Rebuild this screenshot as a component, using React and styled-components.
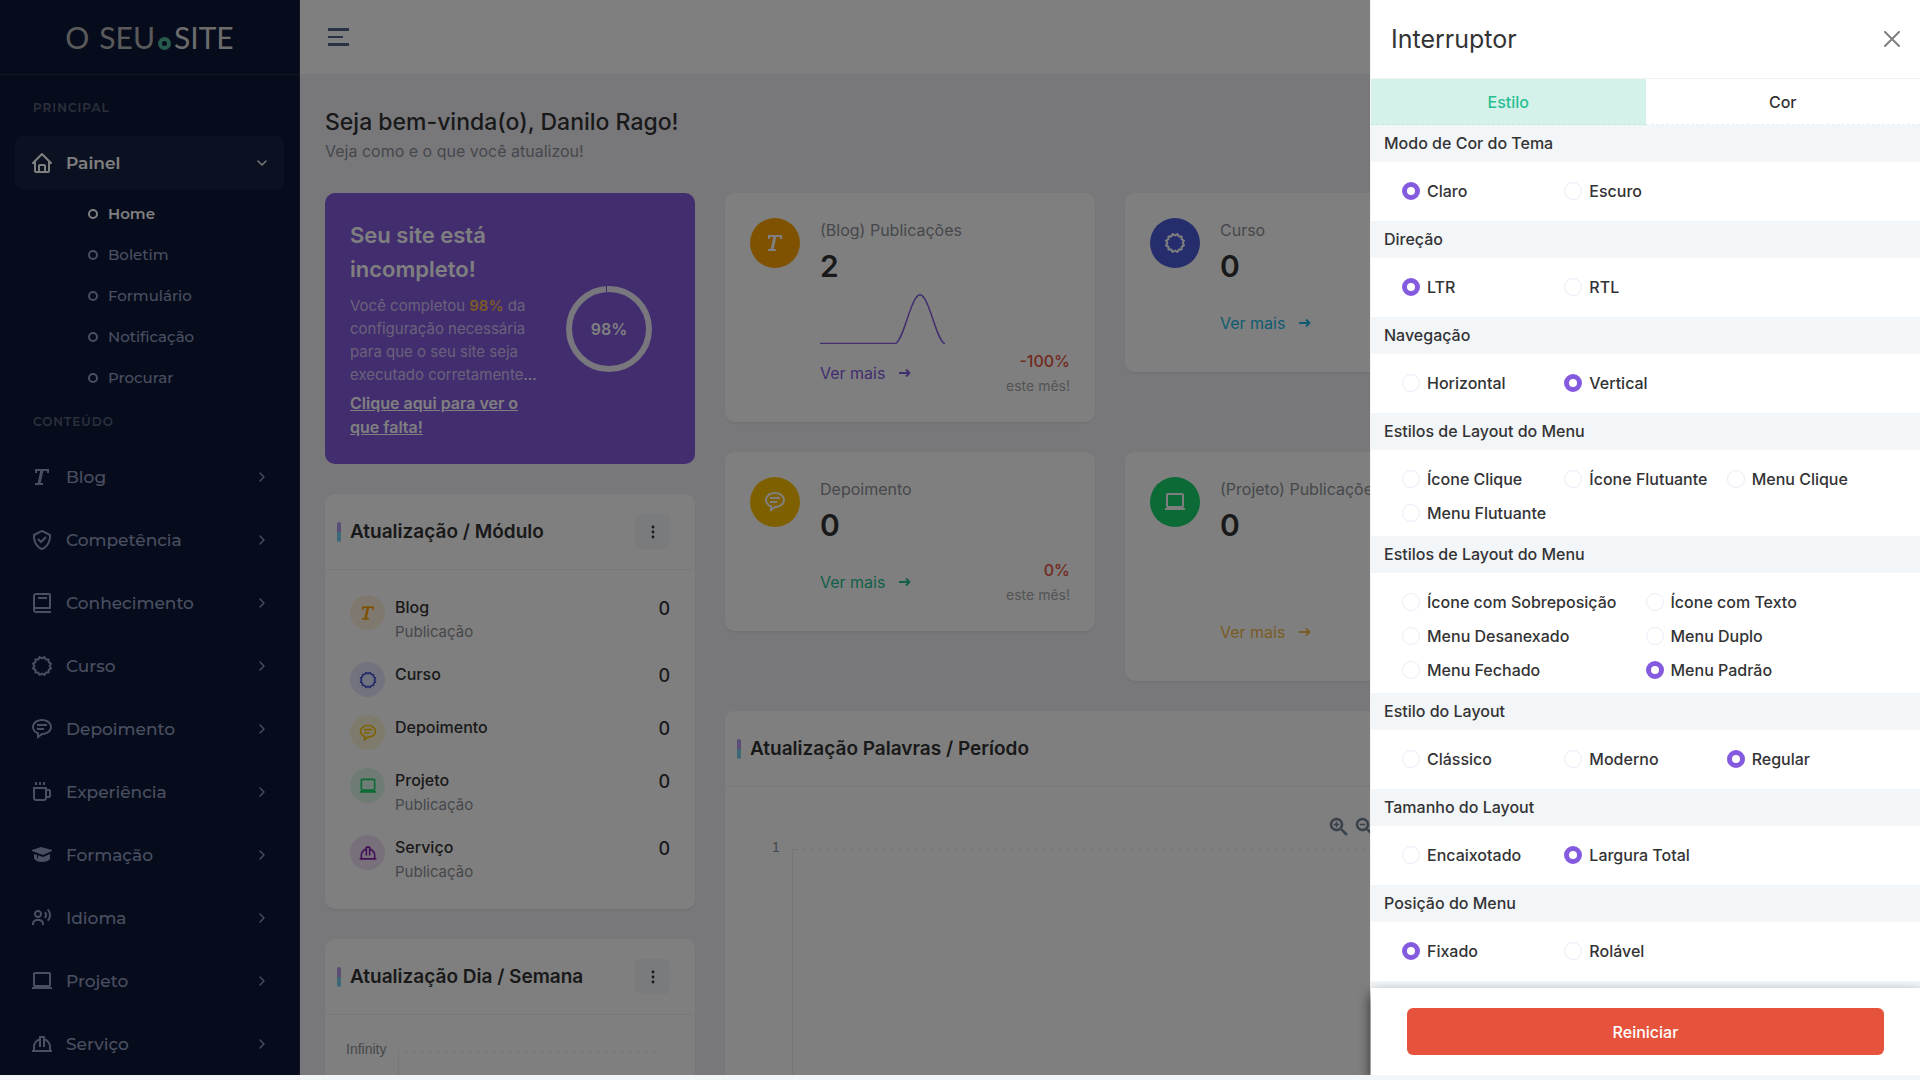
import React from "react";
import styled, { createGlobalStyle } from "styled-components";
import {
  BiHome, BiText, BiCheckShield, BiBook, BiCertification, BiMessageRoundedDetail,
  BiCoffee, BiSolidGraduation, BiUserVoice, BiLaptop, BiHardHat,
} from "react-icons/bi";
import { FiChevronRight, FiChevronDown } from "react-icons/fi";
import { MdOutlineZoomIn, MdOutlineZoomOut } from "react-icons/md";

const color = {
  primary: "#845adf",
  success: "#26bf94",
  danger: "#e6533c",
  text: "#333335",
  muted: "#8c9097",
  border: "#f3f3f3",
  light: "#f3f6f8",
  menu: "#a3aed1",
};

const GlobalStyle = createGlobalStyle`
  *, *::before, *::after { box-sizing: border-box; }
  body {
    margin: 0;
    background: ${color.light};
    color: ${color.text};
    font-family: Inter, "Liberation Sans", sans-serif;
    font-size: 16px;
    line-height: 24px;
    overflow: hidden;
  }
  h1, h2, h3, p, ul, fieldset { margin: 0; padding: 0; border: 0; }
  ul { list-style: none; }
  a { color: inherit; text-decoration: none; }
  button { font: inherit; color: inherit; background: none; border: 0; padding: 0; cursor: pointer; }
  svg { display: block; flex: none; }
`;

const Shell = styled.div`
  display: flex;
  height: calc(100vh - 5px);
  overflow: hidden;
`;

/* ---------- Sidebar ---------- */

const Sidebar = styled.aside`
  flex: none;
  width: 300px;
  background: #0d1839;
  border-right: 1px solid rgba(255, 255, 255, 0.1);
  color: ${color.menu};
  font-family: Montserrat, Inter, sans-serif;
`;

const Brand = styled.a`
  display: flex;
  align-items: center;
  justify-content: center;
  height: 75px;
  border-bottom: 1px solid rgba(255, 255, 255, 0.1);
  font-family: Lato, sans-serif;
  font-size: 30px;
  line-height: 40px;
  color: #b4b4b4;
`;

const BrandRing = styled.span`
  margin-right: 10px;
`;

const BrandStrong = styled.span`
  color: #d8d8d8;
`;

const BrandDot = styled.i`
  width: 13px;
  height: 13px;
  margin: 13px 3px 0;
  border: 4px solid #4fb398;
  border-radius: 50%;
`;

const Category = styled.h2`
  padding: ${(p) => (p.$first ? "24px 33px 19px" : "15px 33px 19px")};
  font-size: 12px;
  line-height: 18px;
  font-weight: 600;
  letter-spacing: 1px;
  text-transform: uppercase;
  color: #585f78;
`;

const MenuList = styled.ul`
  display: flex;
  flex-direction: column;
  gap: 10px;
  padding: 0 15px;
`;

const MenuButton = styled.button`
  display: flex;
  align-items: center;
  gap: 12px;
  width: 100%;
  height: 53px;
  padding: 0 14px 0 15px;
  border-radius: 8px;
  font-size: 17px;
  font-weight: ${(p) => (p.$active ? 600 : 500)};
  color: ${(p) => (p.$active ? "#fff" : color.menu)};
  background: ${(p) => (p.$active ? "rgba(255, 255, 255, 0.05)" : "none")};
  opacity: ${(p) => (p.$active ? 1 : 0.9)};
  text-align: left;

  span { flex: 1; }
`;

const SubList = styled.ul`
  padding: 4px 0 0 73px;
`;

const SubLink = styled.a`
  display: flex;
  align-items: center;
  gap: 10px;
  height: 41px;
  font-size: 15px;
  font-weight: ${(p) => (p.$active ? 600 : 500)};
  color: ${(p) => (p.$active ? "#fff" : color.menu)};
  opacity: ${(p) => (p.$active ? 1 : 0.9)};

  &::before {
    content: "";
    width: 10px;
    height: 10px;
    border: 2px solid currentColor;
    border-radius: 50%;
  }
`;

/* ---------- Main ---------- */

const Main = styled.div`
  flex: 1;
  min-width: 0;
  background: #f0f1f7;
`;

const TopBar = styled.header`
  display: flex;
  align-items: center;
  height: 74px;
  padding: 0 28px;
  background: #fff;
`;

const Burger = styled.button`
  display: flex;
  flex-direction: column;
  justify-content: space-between;
  width: 21px;
  height: 18px;

  i { height: 3px; background: #536485; width: 100%; }
  i:nth-child(2) { width: 15px; height: 2px; }
`;

const Content = styled.main`
  padding: 34px 25px 0;
`;

const Welcome = styled.div`
  margin-bottom: 27px;

  h1 { font-size: 23px; line-height: 28px; font-weight: 500; }
  p { font-size: 16px; line-height: 30px; color: ${color.muted}; }
`;

const Columns = styled.div`
  display: grid;
  grid-template-columns: repeat(4, 1fr);
  gap: 30px;
  align-items: start;
`;

const Stack = styled.div`
  display: flex;
  flex-direction: column;
  gap: 30px;
`;

const Wide = styled(Stack)`
  grid-column: span 3;
`;

const StatGrid = styled.div`
  display: grid;
  grid-template-columns: repeat(3, 1fr);
  gap: 30px;
  align-items: start;
`;

const Card = styled.section`
  background: #fff;
  border-radius: 10px;
  box-shadow: 0 2px 2px rgba(0, 0, 0, 0.05);
`;

const PromoCard = styled(Card)`
  display: flex;
  align-items: center;
  padding: 25px;
  background: ${color.primary};
  color: #fff;
  box-shadow: none;
`;

const PromoText = styled.div`
  width: 192px;
  margin-right: 24px;

  h2 { font-size: 22px; line-height: 34px; font-weight: 600; margin-bottom: 8px; }
  a { display: block; margin-top: 5px; font-weight: 600; line-height: 24px; text-decoration: underline; }
`;

const PromoCopy = styled.p`
  font-size: 15px;
  line-height: 23px;
  color: rgba(255, 255, 255, 0.65);

  b { font-weight: 600; color: #f5b849; }
  span { color: #fff; }
`;

const Ring = styled.svg`
  text {
    font-size: 16px;
    font-weight: 600;
    fill: #fff;
    text-anchor: middle;
  }
`;

const StatCard = styled(Card)`
  display: flex;
  gap: 20px;
  padding: 25px;
`;

const RoundIcon = styled.span`
  display: flex;
  align-items: center;
  justify-content: center;
  flex: none;
  width: ${(p) => p.$size}px;
  height: ${(p) => p.$size}px;
  border-radius: 50%;
  background: ${(p) => p.$bg};
  color: ${(p) => p.$fg};
`;

const StatBody = styled.div`
  flex: 1;
  color: ${color.muted};
`;

const StatValue = styled.p`
  margin: 5px 0 9px;
  font-size: 30px;
  line-height: 38px;
  font-weight: 600;
  color: ${color.text};
`;

const Spark = styled.svg`
  width: 125px;
  height: 50px;
`;

const StatFoot = styled.div`
  display: flex;
  align-items: center;
  justify-content: space-between;
  height: 53px;
  padding-top: 4px;
`;

const MoreLink = styled.a`
  display: flex;
  align-items: center;
  gap: 14px;
  color: ${(p) => p.$tone};
`;

const Trend = styled.p`
  display: flex;
  flex-direction: column;
  align-items: flex-end;
  padding-top: 2px;
  font-size: 14px;
  line-height: 26px;
  color: #a6a9ae;

  b { font-size: 16px; line-height: 24px; font-weight: 500; color: ${color.danger}; }
`;

const CardHead = styled.header`
  display: flex;
  align-items: center;
  justify-content: space-between;
  height: 76px;
  padding: 0 25px 0 12px;
  border-bottom: 1px solid ${color.border};
`;

const CardTitle = styled.h2`
  display: flex;
  align-items: center;
  gap: 9px;
  font-size: 19px;
  font-weight: 600;

  &::before {
    content: "";
    width: 4px;
    height: 20px;
    border-radius: 2px;
    background: linear-gradient(to bottom, #b59cec 50%, #7bd3ef 50%);
  }
`;

const MoreButton = styled.button`
  display: flex;
  align-items: center;
  justify-content: center;
  width: 35px;
  height: 35px;
  border-radius: 5px;
  background: ${color.light};
`;

const ModuleList = styled.ul`
  display: flex;
  flex-direction: column;
  gap: 18px;
  padding: 25px;
`;

const ModuleRow = styled.li`
  display: flex;
  gap: 10px;
  min-height: 35px;

  div { flex: 1; }
  h3 { font-size: 16px; line-height: 24px; font-weight: 500; }
  p { font-size: 15px; line-height: 25px; color: ${color.muted}; }
  strong { font-size: 18px; line-height: 27px; font-weight: 500; }
`;

const ChartArea = styled.div`
  display: flex;
  flex-direction: column;
  padding: ${(p) => p.$pad};
  color: ${color.muted};
`;

const ChartTools = styled.div`
  display: flex;
  gap: 2px;
  height: 24px;
  width: 543px;
  margin-left: auto;
  color: #6e8192;

  path:not([fill="none"]) { stroke: currentColor; stroke-width: 0.6; }
  path[fill="none"] { stroke: none; }
`;

const Plot = styled.div`
  display: flex;
  gap: 12px;
  font-family: "Liberation Sans", sans-serif;
  font-size: 14px;
  line-height: 16px;

  &::after {
    content: "";
    flex: 1;
    height: 320px;
    margin: 10px 12px 0 0;
    border-left: 1px solid #eceef1;
    background: linear-gradient(to right, #ebebee 50%, transparent 50%) top / 8px 1px repeat-x;
  }
`;

/* ---------- Settings panel ---------- */

const Backdrop = styled.div`
  position: fixed;
  inset: 0 0 5px;
  background: rgba(0, 0, 0, 0.5);
`;

const Panel = styled.aside`
  position: fixed;
  inset: 0 0 5px auto;
  display: flex;
  flex-direction: column;
  width: 550px;
  border-left: 1px solid ${color.border};
  background: #fff;
`;

const PanelHead = styled.header`
  display: flex;
  align-items: center;
  justify-content: space-between;
  flex: none;
  height: 79px;
  padding: 0 20px;
  border-bottom: 1px solid ${color.border};

  h2 { font-size: 25px; line-height: 32px; font-weight: 400; }
  button { color: #808080; }
`;

const Tabs = styled.div`
  display: grid;
  grid-template-columns: 1fr 1fr;
  flex: none;
`;

const Tab = styled.button`
  height: 46px;
  border-bottom: 1px dashed ${(p) => (p.$active ? "#bfe9dd" : "#eceff2")};
  font-weight: 500;
  color: ${(p) => (p.$active ? color.success : color.text)};
  background: ${(p) => (p.$active ? "#d4f2e9" : "#fff")};
`;

const PanelBody = styled.form`
  flex: 1;
  min-height: 0;
  overflow: hidden;
`;

const GroupTitle = styled.h3`
  padding: 0 13px;
  font-size: 16px;
  line-height: 37px;
  font-weight: 500;
  background: ${color.light};
`;

const Options = styled.div`
  display: grid;
  grid-template-columns: repeat(${(p) => p.$cols}, 1fr);
  row-gap: 10px;
  align-content: start;
  min-height: 59px;
  padding: 17px 31px 11px;
`;

const Option = styled.label`
  display: flex;
  align-items: center;
  gap: 7px;
  height: 24px;
  font-weight: 500;
  white-space: nowrap;
`;

const Radio = styled.input`
  appearance: none;
  flex: none;
  width: 18px;
  height: 18px;
  margin: 0;
  border: 1px solid #e9edf6;
  border-radius: 50%;
  background: #fff;

  &:checked { border: 5px solid ${color.primary}; }
`;

const PanelFoot = styled.footer`
  flex: none;
  padding: 20px 36px;
  background: #fff;
  box-shadow: 0 6px 12px rgba(0, 0, 0, 0.7);
  clip-path: inset(-6px 0 0 -14px);
`;

const ResetButton = styled.button`
  display: block;
  width: 100%;
  height: 47px;
  border-radius: 6px;
  background: ${color.danger};
  color: #fff;
  font-weight: 500;
`;

/* ---------- Data ---------- */

const subItems = ["Home", "Boletim", "Formulário", "Notificação", "Procurar"];

const menuItems = [
  ["Blog", BiText],
  ["Competência", BiCheckShield],
  ["Conhecimento", BiBook],
  ["Curso", BiCertification],
  ["Depoimento", BiMessageRoundedDetail],
  ["Experiência", BiCoffee],
  ["Formação", BiSolidGraduation],
  ["Idioma", BiUserVoice],
  ["Projeto", BiLaptop],
  ["Serviço", BiHardHat],
];

const modules = [
  { name: "Blog", sub: "Publicação", icon: BiText, fg: "#ffa505", bg: "#fff1dc" },
  { name: "Curso", icon: BiCertification, fg: "#4b5bdb", bg: "#e4e6fa" },
  { name: "Depoimento", icon: BiMessageRoundedDetail, fg: "#ffc102", bg: "#fff7d9" },
  { name: "Projeto", sub: "Publicação", icon: BiLaptop, fg: "#19d46d", bg: "#dcf9e8" },
  { name: "Serviço", sub: "Publicação", icon: BiHardHat, fg: "#8920ad", bg: "#f0e0f5" },
];

const groups = [
  ["Modo de Cor do Tema", 3, ["Claro", "Escuro"], "Claro"],
  ["Direção", 3, ["LTR", "RTL"], "LTR"],
  ["Navegação", 3, ["Horizontal", "Vertical"], "Vertical"],
  ["Estilos de Layout do Menu", 3, ["Ícone Clique", "Ícone Flutuante", "Menu Clique", "Menu Flutuante"], null],
  ["Estilos de Layout do Menu", 2, ["Ícone com Sobreposição", "Ícone com Texto", "Menu Desanexado", "Menu Duplo", "Menu Fechado", "Menu Padrão"], "Menu Padrão"],
  ["Estilo do Layout", 3, ["Clássico", "Moderno", "Regular"], "Regular"],
  ["Tamanho do Layout", 3, ["Encaixotado", "Largura Total"], "Largura Total"],
  ["Posição do Menu", 3, ["Fixado", "Rolável"], "Fixado"],
];

/* ---------- Parts ---------- */

const ArrowIcon = () => (
  <svg width="12" height="12" viewBox="0 0 12 12" fill="none" stroke="currentColor" strokeWidth="2" aria-hidden="true">
    <path d="M0 6h10.5M7 2.5 10.5 6 7 9.5" strokeLinejoin="round" />
  </svg>
);

const DotsIcon = () => (
  <svg width="4" height="14" viewBox="0 0 4 14" fill="currentColor" aria-hidden="true">
    <circle cx="2" cy="2" r="1.4" />
    <circle cx="2" cy="7" r="1.4" />
    <circle cx="2" cy="12" r="1.4" />
  </svg>
);

function Stat({ title, value, icon: Icon, bg, tone, spark, blank, trend }) {
  return (
    <StatCard>
      <RoundIcon $size={50} $bg={bg} $fg="#fff"><Icon size={24} /></RoundIcon>
      <StatBody>
        <p>{title}</p>
        <StatValue>{value}</StatValue>
        {(spark || blank) && (
          <Spark viewBox="0 0 125 50" fill="none" stroke={color.primary} strokeWidth="1.5">
            {spark && <path d="M0 49.5H75C83 49.5 91 .75 100 .75S117 49.5 125 49.5" />}
          </Spark>
        )}
        <StatFoot>
          <MoreLink href="#" $tone={tone}>Ver mais <ArrowIcon /></MoreLink>
          {trend && <Trend><b>{trend}</b>este mês!</Trend>}
        </StatFoot>
      </StatBody>
    </StatCard>
  );
}

function TitledHead({ title, menu }) {
  return (
    <CardHead>
      <CardTitle>{title}</CardTitle>
      {menu && <MoreButton aria-label="Mais opções"><DotsIcon /></MoreButton>}
    </CardHead>
  );
}

function Settings() {
  return (
    <Panel aria-label="Interruptor">
      <PanelHead>
        <h2>Interruptor</h2>
        <button aria-label="Fechar">
          <svg width="16" height="16" viewBox="0 0 16 16" fill="none" stroke="currentColor" strokeWidth="2" strokeLinecap="round">
            <path d="M1 1 15 15M15 1 1 15" />
          </svg>
        </button>
      </PanelHead>
      <Tabs role="tablist">
        <Tab role="tab" aria-selected="true" $active>Estilo</Tab>
        <Tab role="tab" aria-selected="false">Cor</Tab>
      </Tabs>
      <PanelBody>
        {groups.map(([title, cols, options, checked], g) => (
          <fieldset key={g} aria-label={title}>
            <GroupTitle>{title}</GroupTitle>
            <Options $cols={cols}>
              {options.map((name) => (
                <Option key={name}>
                  <Radio type="radio" name={`group-${g}`} defaultChecked={name === checked} />
                  {name}
                </Option>
              ))}
            </Options>
          </fieldset>
        ))}
        <GroupTitle aria-hidden="true">&nbsp;</GroupTitle>
      </PanelBody>
      <PanelFoot>
        <ResetButton>Reiniciar</ResetButton>
      </PanelFoot>
    </Panel>
  );
}

export default function App() {
  return (
    <>
      <GlobalStyle />
      <Shell>
        <Sidebar>
          <Brand href="#">
            <BrandRing>O</BrandRing>SEU<BrandDot /><BrandStrong>SITE</BrandStrong>
          </Brand>
          <nav>
            <Category $first>Principal</Category>
            <MenuList>
              <li>
                <MenuButton $active>
                  <BiHome size={24} /><span>Painel</span><FiChevronDown size={16} />
                </MenuButton>
                <SubList>
                  {subItems.map((name) => (
                    <li key={name}><SubLink href="#" $active={name === "Home"}>{name}</SubLink></li>
                  ))}
                </SubList>
              </li>
            </MenuList>
            <Category>Conteúdo</Category>
            <MenuList>
              {menuItems.map(([name, Icon]) => (
                <li key={name}>
                  <MenuButton>
                    <Icon size={24} /><span>{name}</span><FiChevronRight size={16} />
                  </MenuButton>
                </li>
              ))}
            </MenuList>
          </nav>
        </Sidebar>

        <Main>
          <TopBar>
            <Burger aria-label="Alternar menu"><i /><i /><i /></Burger>
          </TopBar>
          <Content>
            <Welcome>
              <h1>Seja bem-vinda(o), Danilo Rago!</h1>
              <p>Veja como e o que você atualizou!</p>
            </Welcome>
            <Columns>
              <Stack>
                <PromoCard>
                  <PromoText>
                    <h2>Seu site está incompleto!</h2>
                    <PromoCopy>
                      Você completou <b>98%</b>
                      {" da "}
                      {"configuração necessária para que o seu site seja executado corretamente"}
                      <span>...</span>
                    </PromoCopy>
                    <a href="#">Clique aqui para ver o que falta!</a>
                  </PromoText>
                  <Ring width="86" height="86" viewBox="0 0 86 86">
                    <circle cx="43" cy="43" r="40" fill="none" stroke="#fff" strokeOpacity="0.9" strokeWidth="6" />
                    <path d="M40.5 0v6" stroke={color.primary} strokeWidth="1" />
                    <text x="43" y="49">98%</text>
                  </Ring>
                </PromoCard>
                <Card>
                  <TitledHead title="Atualização / Módulo" menu />
                  <ModuleList>
                    {modules.map(({ name, sub, icon: Icon, fg, bg }) => (
                      <ModuleRow key={name}>
                        <RoundIcon $size={35} $bg={bg} $fg={fg}><Icon size={20} /></RoundIcon>
                        <div>
                          <h3>{name}</h3>
                          {sub && <p>{sub}</p>}
                        </div>
                        <strong>0</strong>
                      </ModuleRow>
                    ))}
                  </ModuleList>
                </Card>
                <Card>
                  <TitledHead title="Atualização Dia / Semana" menu />
                  <ChartArea $pad="26px 25px 0 21px">
                    <Plot>Infinity</Plot>
                  </ChartArea>
                </Card>
              </Stack>

              <Wide>
                <StatGrid>
                  <Stat title="(Blog) Publicações" value="2" icon={BiText} bg="#ffa505" tone={color.primary} spark trend="-100%" />
                  <Stat title="Curso" value="0" icon={BiCertification} bg="#4b5bdb" tone="#23b7e5" />
                </StatGrid>
                <StatGrid>
                  <Stat title="Depoimento" value="0" icon={BiMessageRoundedDetail} bg="#ffc102" tone={color.success} trend="0%" />
                  <Stat title="(Projeto) Publicações" value="0" icon={BiLaptop} bg="#19d46d" tone="#f5b849" blank />
                </StatGrid>
                <Card>
                  <TitledHead title="Atualização Palavras / Período" />
                  <ChartArea $pad="28px 25px 0 47px">
                    <ChartTools><MdOutlineZoomIn size={24} /><MdOutlineZoomOut size={24} /></ChartTools>
                    <Plot>1</Plot>
                  </ChartArea>
                </Card>
              </Wide>
            </Columns>
          </Content>
        </Main>
      </Shell>
      <Backdrop />
      <Settings />
    </>
  );
}
